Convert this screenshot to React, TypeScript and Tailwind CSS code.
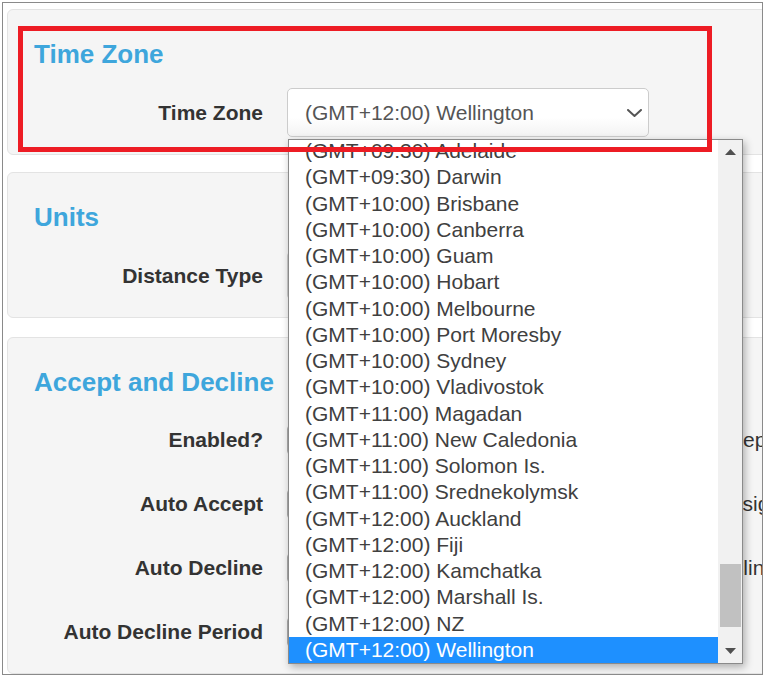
import type { ReactNode } from 'react'

const zones = [
  '(GMT+09:30) Adelaide',
  '(GMT+09:30) Darwin',
  '(GMT+10:00) Brisbane',
  '(GMT+10:00) Canberra',
  '(GMT+10:00) Guam',
  '(GMT+10:00) Hobart',
  '(GMT+10:00) Melbourne',
  '(GMT+10:00) Port Moresby',
  '(GMT+10:00) Sydney',
  '(GMT+10:00) Vladivostok',
  '(GMT+11:00) Magadan',
  '(GMT+11:00) New Caledonia',
  '(GMT+11:00) Solomon Is.',
  '(GMT+11:00) Srednekolymsk',
  '(GMT+12:00) Auckland',
  '(GMT+12:00) Fiji',
  '(GMT+12:00) Kamchatka',
  '(GMT+12:00) Marshall Is.',
  '(GMT+12:00) NZ',
  '(GMT+12:00) Wellington',
]

const selected = '(GMT+12:00) Wellington'

const Chevron = () => (
  <svg width="15" height="8" viewBox="0 0 15 8" fill="none">
    <polyline points="1,1 7.5,7 14,1" stroke="#555" strokeWidth="2" strokeLinecap="round" strokeLinejoin="round" />
  </svg>
)

const Arrow = ({ down }: { down?: boolean }) => (
  <svg width="11" height="6" viewBox="0 0 11 6">
    <polygon points={down ? '0,0 11,0 5.5,6' : '0,6 11,6 5.5,0'} fill="#505050" />
  </svg>
)

const Panel = ({ title, className = '', children }: { title: string; className?: string; children: ReactNode }) => (
  <div className={`w-[820px] rounded-[6px] border border-[#e3e3e3] bg-[#f5f5f5] px-[27px] pt-[29px] pb-[17px] ${className}`}>
    <h2 className="h-[30px] -ml-[1px] text-[26px] leading-[30px] font-bold text-[#3ea6dc]">{title}</h2>
    {children}
  </div>
)

const Row = ({ label, children }: { label: string; children: ReactNode }) => (
  <div className="flex h-[49px] items-center">
    <label className="w-[228px] shrink-0 text-right text-[21px] font-bold text-[#333]">{label}</label>
    <div className="ml-[24px] flex items-center">{children}</div>
  </div>
)

// closed select, Bootstrap-ish
const SelectBox = ({ value }: { value?: string }) => (
  <div className="flex h-[49px] w-[362px] items-center justify-between rounded-[5px] border border-[#cccccc] bg-linear-to-b from-white from-60% to-[#f3f3f3] pl-[17px] pr-[6px] text-[21px] text-[#555]">
    <span className="whitespace-nowrap">{value}</span>
    <Chevron />
  </div>
)

// the native option list, opened under the time zone select
const Dropdown = () => (
  <div className="absolute left-[1px] top-[51px] z-10 flex h-[525px] w-[455px] border border-[#8a8a8a] bg-white shadow-[2px_3px_8px_rgba(0,0,0,0.3)]">
    <ul className="flex w-[429px] flex-col justify-end overflow-hidden">
      {zones.map((z) => (
        <li
          key={z}
          className={`h-[26.25px] shrink-0 whitespace-nowrap pl-[16px] text-[21px] leading-[26.25px] ${
            z === selected ? 'bg-[#1e90ff] text-white' : 'text-[#404040]'
          }`}
        >
          {z}
        </li>
      ))}
    </ul>
    <div className="flex w-[24px] flex-col bg-[#f1f1f1]">
      <div className="flex h-[24px] items-center justify-center">
        <Arrow />
      </div>
      <div className="flex-1">
        <div className="ml-[2px] mt-[400px] h-[63px] w-[21px] bg-[#c1c1c1]" />
      </div>
      <div className="flex h-[24px] items-center justify-center">
        <Arrow down />
      </div>
    </div>
  </div>
)

const Field = ({ width, note }: { width: string; note?: string }) => (
  <>
    <div className={`h-[30px] ${width} rounded-[4px] border border-[#aaa] bg-white`} />
    {note && <span className="ml-[10px] whitespace-nowrap text-[21px] text-[#333]">{note}</span>}
  </>
)

export default function App() {
  return (
    <div className="font-['Liberation_Sans',Arial,sans-serif]">
      <div className="relative ml-[2px] mt-[2px] h-[673px] w-[761px] overflow-hidden border border-[#8a8a8a] bg-white pl-[4px] pt-[6px]">
        <Panel title="Time Zone">
          <div className="mt-[19px]">
            <Row label="Time Zone">
              <div className="relative">
                <SelectBox value={selected} />
                <Dropdown />
              </div>
            </Row>
          </div>
        </Panel>

        <Panel title="Units" className="mt-[17px]">
          <div className="mt-[19px]">
            <Row label="Distance Type">
              <SelectBox />
            </Row>
          </div>
        </Panel>

        <Panel title="Accept and Decline" className="mt-[19px]">
          <div className="mt-[18px] flex flex-col gap-[15px]">
            <Row label="Enabled?">
              <Field width="w-[411px]" note="Accept and decline jobs from the app" />
            </Row>
            <Row label="Auto Accept">
              <Field width="w-[421px]" note="Assign jobs automatically" />
            </Row>
            <Row label="Auto Decline">
              <Field width="w-[409px]" note="Decline jobs automatically" />
            </Row>
            <Row label="Auto Decline Period">
              <Field width="w-[200px]" />
            </Row>
          </div>
        </Panel>

        <div className="absolute left-[15px] top-[23px] z-20 h-[126px] w-[694px] border-[5px] border-[#ed1c24]" />
      </div>
    </div>
  )
}
